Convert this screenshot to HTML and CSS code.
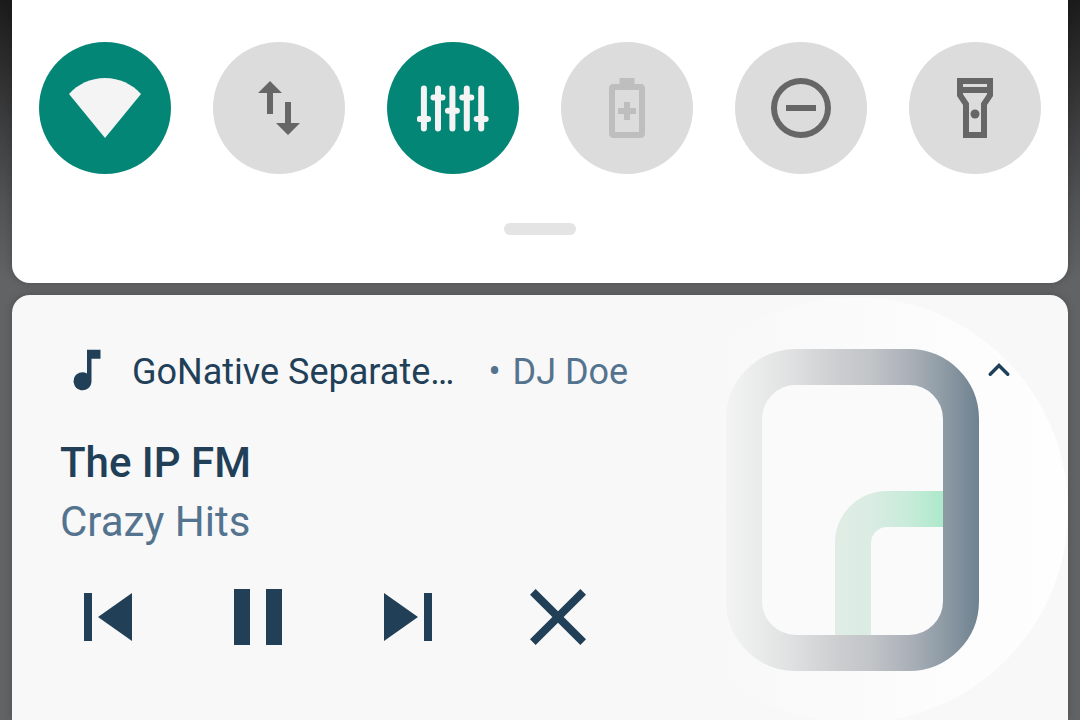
FILE: index.html
```html
<!DOCTYPE html>
<html lang="en">
<head>
    <meta charset="UTF-8">
    <meta name="viewport" content="width=device-width, initial-scale=1.0">
    <title>Notification shade</title>
    <link rel="stylesheet" href="styles.css">
</head>
<body>

    <section class="quick-settings">
        <div class="tiles">
            <button class="tile active" aria-label="Wi-Fi">
                <svg viewBox="0 0 24 24"><path d="M12 2C7.2 2 2.9 4.1 0 7.3L12 22 24 7.3C21.1 4.1 16.8 2 12 2z"/></svg>
            </button>
            <button class="tile" aria-label="Mobile data">
                <svg viewBox="0 0 24 24"><path d="M9 3L5 7h3v7h2V7h3zM16 17v-7h-2v7h-3l4 4 4-4z"/></svg>
            </button>
            <button class="tile active" aria-label="Equalizer">
                <svg class="sliders" viewBox="0 0 24 24">
                    <path d="M2.3 5.5V18.8M7 5.5V18.8M11.8 5.5V18.8M16.6 5.5V18.8M21.4 5.5V18.8"/>
                    <path d="M.9 15.7h2.8M5.5 8.5h3M10.3 12.9h3M15.1 8.5h3M19.9 15.7h3"/>
                </svg>
            </button>
            <button class="tile" aria-label="Battery Saver" disabled>
                <svg viewBox="0 0 24 24"><path fill-rule="evenodd" d="M14.5 4V2h-5v2H7.3C6.6 4 6 4.6 6 5.3v15.4c0 .7.6 1.3 1.3 1.3h9.4c.7 0 1.3-.6 1.3-1.3V5.3c0-.7-.6-1.3-1.3-1.3zM16 20H8V6h8zM11 16h2v-2h2v-2h-2v-2h-2v2H9v2h2z"/></svg>
            </button>
            <button class="tile" aria-label="Do Not Disturb">
                <svg viewBox="0 0 24 24"><path fill-rule="evenodd" d="M12 2a10 10 0 1 0 0 20 10 10 0 0 0 0-20zm0 18a8 8 0 1 1 0-16 8 8 0 0 1 0 16zM7 11h10v2H7z"/></svg>
            </button>
            <button class="tile" aria-label="Flashlight">
                <svg viewBox="0 0 24 24">
                    <path fill-rule="evenodd" d="M18 2H6v6l2 3v11h8V11l2-3zM16 4v1H8V4zM14 10.4V20h-4v-9.6l-2-3V7h8v.4z"/>
                    <circle cx="12" cy="14" r="1.5"/>
                </svg>
            </button>
        </div>
        <div class="drag-handle"></div>
    </section>

    <section class="media">
        <!-- cover art, fades out to the left -->
        <svg class="artwork" viewBox="0 0 426 426">
            <defs>
                <linearGradient id="disc" x1="0" x2="1">
                    <stop offset="0.15" stop-color="#f8f8f8"/>
                    <stop offset="0.45" stop-color="#fafafa"/>
                    <stop offset="0.8" stop-color="#fdfdfd"/>
                    <stop offset="1" stop-color="#fefefe"/>
                </linearGradient>
                <linearGradient id="frame" gradientUnits="userSpaceOnUse" x1="84" x2="337" y1="0" y2="0">
                    <stop offset="0" stop-color="#f3f3f3"/>
                    <stop offset="0.15" stop-color="#e8eae9"/>
                    <stop offset="0.29" stop-color="#dcdddf"/>
                    <stop offset="0.45" stop-color="#cccdcf"/>
                    <stop offset="0.57" stop-color="#c1c5c8"/>
                    <stop offset="0.72" stop-color="#acb1b9"/>
                    <stop offset="0.86" stop-color="#8e9ba5"/>
                    <stop offset="1" stop-color="#6f8290"/>
                </linearGradient>
                <linearGradient id="curve" gradientUnits="userSpaceOnUse" x1="193" x2="301" y1="0" y2="0">
                    <stop offset="0" stop-color="#e0ede5"/>
                    <stop offset="0.33" stop-color="#daece3"/>
                    <stop offset="0.7" stop-color="#c7ebd9"/>
                    <stop offset="1" stop-color="#ace9cb"/>
                </linearGradient>
            </defs>
            <circle cx="213" cy="215" r="213" fill="url(#disc)"/>
            <rect x="102" y="72" width="217" height="286" rx="52" fill="#fafafa"/>
            <path d="M211 341V248a34 34 0 0 1 34-34h57" fill="none" stroke="url(#curve)" stroke-width="36"/>
            <rect x="102" y="72" width="217" height="286" rx="52" fill="none" stroke="url(#frame)" stroke-width="36"/>
        </svg>

        <header class="media-header">
            <svg class="note" viewBox="0 0 24 24"><path d="M12 3v10.55A4 4 0 1 0 14 17V7h4V3z"/></svg>
            <span class="app-name">GoNative Separate…</span>
            <span class="source"><span>•</span><span>DJ Doe</span></span>
            <button class="collapse" aria-label="Collapse">
                <svg viewBox="0 0 24 24"><path d="M7 14.4l5-5 5 5"/></svg>
            </button>
        </header>

        <div class="track">
            <h1>The IP FM</h1>
            <p>Crazy Hits</p>
        </div>

        <div class="controls">
            <button aria-label="Previous">
                <svg viewBox="0 0 24 24"><path d="M6 6h2v12H6zM9.5 12l8.5 6V6z"/></svg>
            </button>
            <button aria-label="Pause">
                <svg viewBox="0 0 24 24"><path d="M6 19h4V5H6zM14 5v14h4V5z"/></svg>
            </button>
            <button aria-label="Next">
                <svg viewBox="0 0 24 24"><path d="M6 18l8.5-6L6 6zM16 6v12h2V6z"/></svg>
            </button>
            <button aria-label="Close">
                <svg viewBox="0 0 24 24"><path d="M19 6.41L17.59 5 12 10.59 6.41 5 5 6.41 10.59 12 5 17.59 6.41 19 12 13.41 17.59 19 19 17.59 13.41 12z"/></svg>
            </button>
        </div>
    </section>

</body>
</html>
```
FILE: styles.css
```css
* {
    box-sizing: border-box;
}
body {
    display: flex;
    flex-direction: column;
    gap: 12px;
    min-height: 100vh;
    margin: 0;
    padding: 0 12px;
    font-family: Roboto, sans-serif;
    background: #626365 linear-gradient(#1b1b1b, #515254 200px, #626365 280px) no-repeat;
}
button {
    padding: 0;
    border: none;
    background: none;
    color: inherit;
    cursor: pointer;
}
svg {
    display: block;
    fill: currentColor;
}

/* quick settings */
.quick-settings {
    padding: 42px 27px 48px;
    background: #fff;
    border-radius: 0 0 18px 18px;
    box-shadow: 0 0 8px rgba(0, 0, 0, 0.2);
}
.tiles {
    display: flex;
    justify-content: space-between;
}
.tile {
    display: flex;
    align-items: center;
    justify-content: center;
    width: 132px;
    height: 132px;
    border-radius: 50%;
    background: #dcdcdc;
    color: #666;
}
.tile svg {
    width: 72px;
    height: 72px;
}
.tile.active {
    background: #038676;
    color: #f4f4f4;
}
.tile:disabled {
    color: #bebebe;
}
.tile .sliders {
    fill: none;
    stroke: currentColor;
    stroke-width: 2;
    stroke-linecap: round;
}
.drag-handle {
    width: 72px;
    height: 12px;
    margin: 49px auto 0;
    border-radius: 6px;
    background: #e4e4e4;
}

/* media notification */
.media {
    position: relative;
    flex: 1;
    padding: 46px 48px 0;
    overflow: hidden;
    background: #f8f8f8;
    border-radius: 18px 18px 0 0;
    color: #214058;
    box-shadow: 0 0 8px rgba(0, 0, 0, 0.2);
}
.artwork {
    position: absolute;
    top: 0;
    right: 0;
    width: 426px;
    height: 426px;
}
.media-header,
.track,
.controls {
    position: relative;
}
.media-header {
    display: flex;
    align-items: center;
    font-size: 36px;
    line-height: 54px;
}
.note {
    width: 54px;
    height: 54px;
    margin-right: 18px;
}
.app-name,
.source {
    padding-top: 4px;
}
.app-name {
    margin-right: 34px;
}
.source {
    display: flex;
    gap: 12px;
    color: #54738f;
}
.collapse {
    margin-left: auto;
}
.collapse svg {
    width: 42px;
    height: 42px;
    fill: none;
    stroke: currentColor;
    stroke-width: 2;
    stroke-linecap: round;
}
.track {
    display: flex;
    flex-direction: column;
    gap: 9px;
    margin-top: 39px;
    font-size: 42px;
    line-height: 50px;
}
.track h1,
.track p {
    margin: 0;
    font-size: inherit;
}
.track h1 {
    font-weight: 500;
}
.track p {
    color: #54738f;
}
.controls {
    display: flex;
    gap: 54px;
    margin-top: 22px;
}
.controls svg {
    width: 96px;
    height: 96px;
}
```
